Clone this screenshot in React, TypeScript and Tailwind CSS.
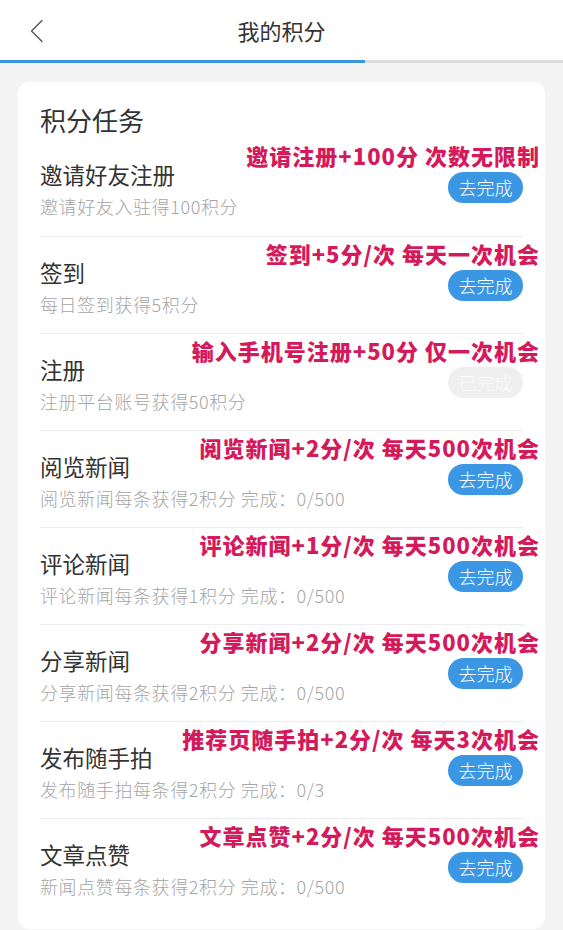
import React from 'react';

interface Task {
  title: string;
  desc: string;
  note: string;
  done?: boolean;
}

const tasks: Task[] = [
  { title: '邀请好友注册', desc: '邀请好友入驻得100积分', note: '邀请注册+100分 次数无限制' },
  { title: '签到', desc: '每日签到获得5积分', note: '签到+5分/次 每天一次机会' },
  { title: '注册', desc: '注册平台账号获得50积分', note: '输入手机号注册+50分 仅一次机会', done: true },
  { title: '阅览新闻', desc: '阅览新闻每条获得2积分 完成：0/500', note: '阅览新闻+2分/次 每天500次机会' },
  { title: '评论新闻', desc: '评论新闻每条获得1积分 完成：0/500', note: '评论新闻+1分/次 每天500次机会' },
  { title: '分享新闻', desc: '分享新闻每条获得2积分 完成：0/500', note: '分享新闻+2分/次 每天500次机会' },
  { title: '发布随手拍', desc: '发布随手拍每条得2积分 完成：0/3', note: '推荐页随手拍+2分/次 每天3次机会' },
  { title: '文章点赞', desc: '新闻点赞每条获得2积分 完成：0/500', note: '文章点赞+2分/次 每天500次机会' },
];

function TaskRow({ task, first }: { task: Task; first: boolean }) {
  return (
    <div className={`relative flex h-[97px] items-start justify-between ${first ? '' : 'border-t border-[#ececec]'}`}>
      <div className="pt-[21px]">
        <div className="text-[22.5px] leading-[28px] text-[#333]">{task.title}</div>
        <div className="mt-[6px] text-[18px] font-light leading-[24px] tracking-[0.6px] text-[#a6a6a6]">{task.desc}</div>
      </div>
      <button
        className={`mt-[33px] h-[31px] w-[75px] rounded-full text-[18px] font-light leading-[31px] ${
          task.done ? 'bg-[#efefef] text-[#fafafa]' : 'bg-[#3b97e4] text-white'
        }`}
      >
        {task.done ? '已完成' : '去完成'}
      </button>
      {/* red annotation laid over the row */}
      <div className="absolute right-[-17px] top-[3px] whitespace-nowrap text-[22px] font-black leading-[26px] tracking-[1px] text-[#d41a5b]">
        {task.note}
      </div>
    </div>
  );
}

export default function App() {
  return (
    <div
      className="min-h-[930px] w-[563px] overflow-hidden bg-[#f4f4f4]"
      style={{ fontFamily: '"Noto Sans CJK SC", "Noto Sans", sans-serif' }}
    >
      <div className="relative flex h-[60px] items-center justify-center bg-white">
        <svg className="absolute left-[28px] top-[19px]" width="18" height="24" viewBox="0 0 18 24" fill="none">
          <path d="M14 1.5 L3.5 12 L14 22.5" stroke="#555" strokeWidth="1.4" strokeLinecap="round" strokeLinejoin="round" />
        </svg>
        <span className="text-[22px] text-[#333]">我的积分</span>
      </div>
      <div className="flex h-[3px] bg-[#dcdcdc]">
        <div className="h-full w-[365px] bg-[#3b97d9]" />
      </div>

      <div className="mx-[18px] mt-[19px] rounded-xl bg-white px-[22px] pb-[14px]">
        <div className="h-[57px] pt-[24px] text-[26px] leading-[28px] text-[#333]">积分任务</div>
        {tasks.map((t, i) => (
          <TaskRow key={t.title} task={t} first={i === 0} />
        ))}
      </div>
    </div>
  );
}
